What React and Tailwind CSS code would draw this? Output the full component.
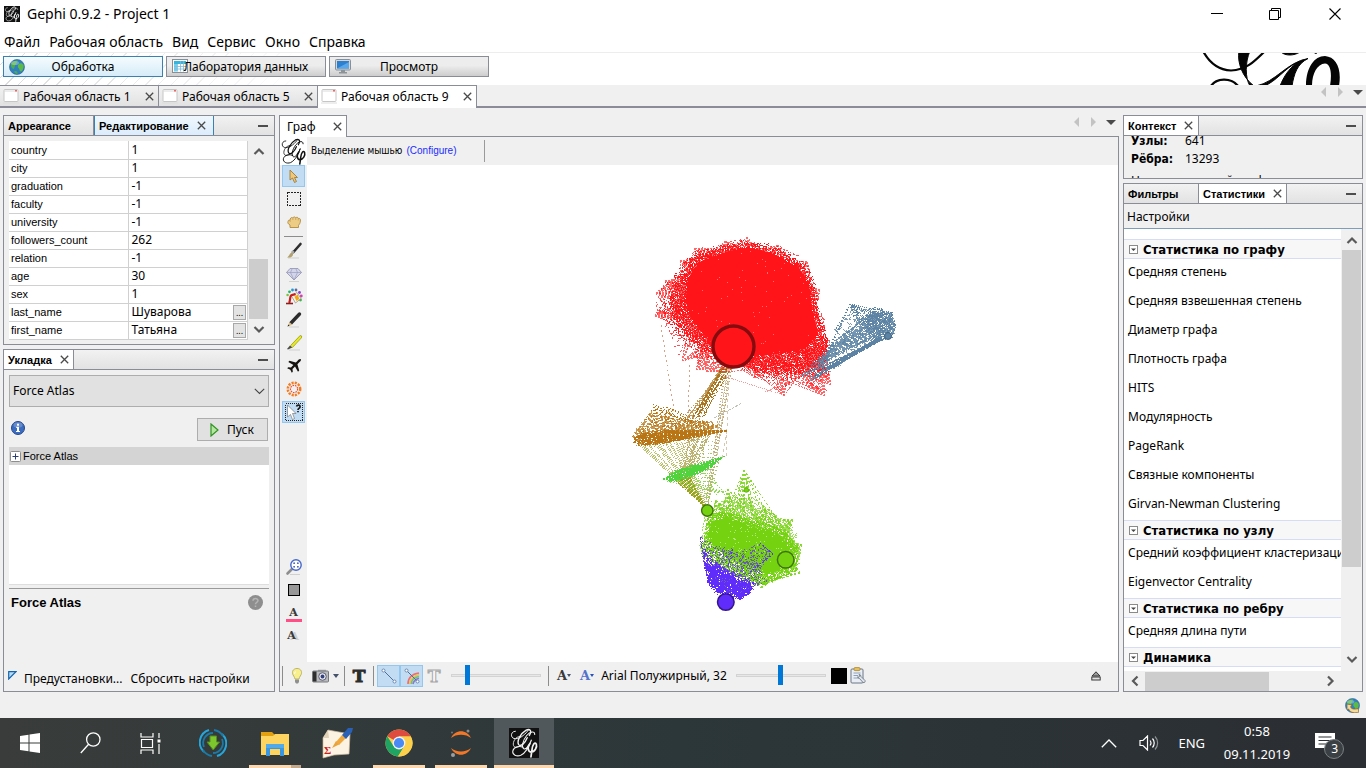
import React from "react";

/* ---------- shared text styles ---------- */
const UI = "font-['Noto_Sans','DejaVu_Sans_Condensed',sans-serif] text-[12px] leading-4";
const TAB = "font-['Liberation_Sans',Arial,sans-serif] text-[11px] leading-4 font-bold";
const SMALL = "font-['Liberation_Sans',Arial,sans-serif] text-[11px] leading-4";
const SHELL = "font-['Noto_Sans','Open_Sans',sans-serif]";

/* ---------- graph geometry ---------- */
function rng(seed) {
  let s = seed;
  return () => {
    s = (s * 1664525 + 1013904223) % 4294967296;
    return s / 4294967296;
  };
}

function inside([x, y], poly) {
  let hit = false;
  for (let i = 0, j = poly.length - 1; i < poly.length; j = i++) {
    const [xi, yi] = poly[i];
    const [xj, yj] = poly[j];
    if (yi > y !== yj > y && x < ((xj - xi) * (y - yi)) / (yj - yi) + xi) hit = !hit;
  }
  return hit;
}

function sampler(poly, rand) {
  const xs = poly.map((p) => p[0]);
  const ys = poly.map((p) => p[1]);
  const x0 = Math.min(...xs);
  const x1 = Math.max(...xs);
  const y0 = Math.min(...ys);
  const y1 = Math.max(...ys);
  return () => {
    for (;;) {
      const p = [x0 + rand() * (x1 - x0), y0 + rand() * (y1 - y0)];
      if (inside(p, poly)) return p;
    }
  };
}

const seg = (a, b) => `M${a[0].toFixed(1)} ${a[1].toFixed(1)}L${b[0].toFixed(1)} ${b[1].toFixed(1)}`;

function fans(tips, target, count, seed) {
  const rand = rng(seed);
  const pick = sampler(target, rand);
  let d = "";
  for (const t of tips) for (let i = 0; i < count; i++) d += seg(t, pick());
  return d;
}

function links(from, to, count, seed) {
  const rand = rng(seed);
  const a = sampler(from, rand);
  const b = sampler(to, rand);
  let d = "";
  for (let i = 0; i < count; i++) d += seg(a(), b());
  return d;
}

function chords(poly, count, reach, seed) {
  const rand = rng(seed);
  const pick = sampler(poly, rand);
  let d = "";
  for (let i = 0; i < count; i++) {
    const a = pick();
    const b = [a[0] + (rand() - 0.5) * reach, a[1] + (rand() - 0.5) * reach];
    if (inside(b, poly)) d += seg(a, b);
  }
  return d;
}

function specks(poly, count, seed) {
  const rand = rng(seed);
  const pick = sampler(poly, rand);
  let d = "";
  for (let i = 0; i < count; i++) {
    const [x, y] = pick();
    d += `M${Math.floor(x)} ${Math.floor(y)}h1v1h-1z`;
  }
  return d;
}

const pts = (poly) => poly.map((p) => p.join(",")).join(" ");

const redHull = [[656,293],[655,315],[662,326],[681,361],[690,347],[695,370],[702,360],[707,372],[716,364],[740,368],[755,378],[772,384],[784,396],[790,382],[825,396],[831,386],[831,340],[820,305],[820,288],[807,262],[798,255],[778,245],[762,242],[747,237],[725,241],[695,248],[680,261],[665,281]];
const redBody = [[660,293],[668,282],[682,263],[697,250],[727,243],[748,239],[777,246],[806,263],[818,288],[818,305],[829,340],[829,374],[790,380],[760,376],[740,368],[700,356],[684,342],[664,318]];
const redMid = [[670,298],[678,276],[690,258],[726,245],[748,242],[777,249],[804,265],[813,285],[818,310],[828,342],[826,370],[790,374],[760,373],[735,364],[700,348],[688,338],[672,316]];
const redCore = [[686,300],[688,278],[700,262],[726,252],[748,247],[774,254],[799,268],[809,285],[812,310],[818,334],[806,348],[780,354],[750,356],[718,348],[703,334],[690,316]];
const redTips = [[656,293],[655,316],[682,361],[696,370],[707,372],[784,396],[825,396],[831,385],[820,290],[807,262],[747,237],[778,245],[695,248],[680,261],[725,241],[755,378],[665,281]];

const blueHull = [[850,304],[862,306],[875,307],[893,311],[896,325],[894,338],[868,347],[834,370],[812,382],[806,378],[826,356],[832,330]];
const blueHead = [[868,310],[880,308],[893,313],[896,325],[894,337],[880,341],[870,336],[864,322]];
const blueTail = [[838,334],[832,350],[812,374],[800,380],[796,378],[820,354]];

const brownHull = [[632,438],[634,430],[642,422],[653,405],[660,416],[668,408],[674,417],[690,419],[712,421],[727,431],[706,437],[680,443],[660,447],[636,446]];
const brownCore = [[633,438],[640,434],[660,430],[685,431],[700,433],[690,438],[668,443],[640,446],[634,443]];
const brownTop = [[696,417],[700,424],[690,430],[675,425],[680,418]];

const limeHull = [[663,479],[672,471],[684,466],[706,461],[725,456],[714,466],[700,474],[683,480],[668,483]];

const greenHull = [[703,505],[712,510],[716,500],[725,500],[728,489],[733,502],[739,485],[744,470],[751,490],[757,504],[769,507],[778,517],[792,519],[796,532],[802,545],[800,573],[780,580],[762,588],[735,581],[705,562],[699,545],[703,525]];
const greenCore = [[708,516],[722,512],[735,514],[752,521],[770,524],[786,532],[798,548],[797,571],[764,585],[740,578],[712,562],[703,545]];
const greenSolid = [[712,522],[724,518],[736,520],[752,527],[768,530],[784,540],[790,552],[788,568],[768,574],[742,566],[718,550],[708,536]];
const greenTips = [[744,470],[728,489],[769,509],[793,520],[802,545],[762,588],[716,501],[800,573]];

const purpleHull = [[700,536],[706,548],[716,562],[733,570],[752,582],[768,580],[752,593],[742,600],[718,597],[708,585],[703,565]];
const purpleCore = [[704,563],[716,568],[732,577],[752,586],[750,594],[740,600],[724,596],[708,583]];
const purpleHaze = [[700,536],[715,545],[732,549],[740,552],[760,543],[773,554],[760,570],[768,580],[745,596],[710,584],[703,565]];

function Graph() {
  return (
    <svg viewBox="307 165 811 497" preserveAspectRatio="xMidYMin meet" className="block h-full w-full bg-white" shapeRendering="crispEdges" role="img" aria-label="Граф">
      {/* long thin links between communities */}
      <g fill="none" strokeWidth="1">
        <path d="M661 325L674 411M690 365L688 416" stroke="#d9a08a" strokeDasharray="2 3" />
        <path d={links([[722,364],[730,368],[724,372],[718,372]], brownTop, 16, 3)} stroke="#c29a5a" strokeDasharray="1 2" />
        <path d={links([[722,366],[732,367],[732,369],[722,369]], [[694,412],[706,414],[704,420],[692,420]], 15, 5)} stroke="#a87420" strokeDasharray="2 2" />
        <path d={links([[724,368],[732,368],[732,370],[724,370]], [[704,500],[709,500],[709,506],[704,506]], 7, 8)} stroke="#c3ab78" strokeDasharray="1 2" />
        <path d="M729 369L726 457M730 369L716 462M728 369L706 500M727 431L722 460" stroke="#d6c9b0" strokeDasharray="3 3" />
        <path d={fans([[707,508]], [[636,446],[662,446],[690,442],[686,438],[640,440]], 30, 9)} stroke="#a9b14b" strokeDasharray="1 1" opacity=".8" />
        <path d={fans([[706,508]], [[672,480],[690,478],[700,476],[676,474]], 22, 10)} stroke="#98a41c" strokeDasharray="2 1" />
        <path d={fans([[707,506]], [[690,440],[724,434],[722,462],[700,462]], 16, 19)} stroke="#a9c76a" strokeDasharray="1 3" />
        <path d={links(limeHull, [[706,500],[716,504],[728,492],[724,490]], 10, 22)} stroke="#8fdc50" strokeDasharray="1 2" />
        <path d={links([[690,425],[722,430],[700,438],[680,440]], [[676,470],[705,462],[700,470],[680,476]], 34, 31)} stroke="#bdb070" strokeDasharray="1 2" />
        <path d="M714 418L742 403" stroke="#bfc3b6" strokeDasharray="3 1" />
        <path d="M720 375L784 395M765 392L790 382" stroke="#f59a9a" strokeDasharray="1 1" />
      </g>

      {/* red community */}
      <g stroke="#ff1519" fill="none" strokeWidth="1">
        <path d={fans(redTips, redMid, 14, 11)} strokeDasharray="2 1" opacity=".65" />
        <path d={chords(redMid, 1500, 44, 12)} strokeDasharray="3 1" opacity=".6" />
        <path d={chords(redHull, 850, 26, 14)} strokeDasharray="2 2" opacity=".75" />
        <polygon points={pts(redCore)} fill="#ff1519" stroke="none" />
      </g>
      <path d={specks(redBody, 3400, 15)} fill="#ff1519" />
      <path d={specks(redMid, 9000, 17)} fill="#ff1519" />
      <path d={specks(redCore, 70, 16)} fill="#ff6b6d" />

      {/* blue community */}
      <g stroke="#5c83a4" fill="none" strokeWidth="1">
        <path d={links(blueHead, blueTail, 54, 41)} strokeDasharray="2 3" opacity=".85" />
        <path d={links([[880,336],[892,338],[872,342]], [[834,368],[812,382],[808,380],[826,362]], 14, 47)} strokeDasharray="3 1" />
        <path d={fans([[850,304]], blueHull, 14, 42)} strokeDasharray="1 2" />
        <path d={fans([[850,304],[893,312],[896,325],[875,307]], blueHead, 8, 43)} strokeDasharray="1 1" />
        <path d={chords(blueHull, 190, 24, 48)} strokeDasharray="2 2" opacity=".8" />
        <path d={chords(blueHead, 120, 20, 44)} strokeDasharray="2 1" opacity=".8" />
      </g>
      <path d={specks(blueHead, 220, 45)} fill="#5c83a4" />

      {/* brown community */}
      <g stroke="#b97514" fill="none" strokeWidth="1">
        <path d={fans([[653,404],[667,407]], brownHull, 12, 51)} strokeDasharray="1 2" />
        <path d={fans([[727,431]], brownCore, 26, 52)} strokeDasharray="3 1" />
        <path d={fans([[633,437],[712,421],[717,427]], brownHull, 13, 53)} strokeDasharray="2 2" opacity=".75" />
        <path d={chords(brownHull, 300, 30, 54)} strokeDasharray="2 2" opacity=".75" />
      </g>
      <path d={specks(brownCore, 620, 55)} fill="#b97514" />

      {/* lime community */}
      <g stroke="#50d43e" fill="none" strokeWidth="1">
        <path d={fans([[725,456],[663,479],[712,467]], limeHull, 16, 61)} strokeDasharray="2 1" />
        <path d={chords(limeHull, 170, 28, 62)} strokeDasharray="2 1" />
      </g>

      {/* green community */}
      <g stroke="#75d211" fill="none" strokeWidth="1">
        <path d={fans(greenTips, greenCore, 14, 71)} strokeDasharray="2 2" opacity=".85" />
        <path d={chords(greenHull, 980, 28, 72)} strokeDasharray="2 1" opacity=".7" />
        <polygon points={pts(greenSolid)} fill="#75d211" stroke="none" />
      </g>
      <path d={specks(greenCore, 4200, 73)} fill="#75d211" />
      <path d={specks(greenCore, 160, 74)} fill="#b2e97a" />

      {/* purple community */}
      <g stroke="#602cfb" fill="none" strokeWidth="1">
        <path d={chords(purpleHaze, 210, 26, 81)} strokeDasharray="1 3" opacity=".75" />
        <path d={chords(purpleHull, 420, 26, 82)} strokeDasharray="2 2" />
        <path d="M773 554L755 568L748 574M760 543L773 554M733 549L728 566" strokeDasharray="2 1" />
      </g>
      <path d={specks(purpleHaze, 420, 84)} fill="#6d5ab8" />
      <path d={specks(purpleCore, 1000, 83)} fill="#602cfb" />

      {/* nodes */}
      <g shapeRendering="auto">
        <circle cx="733.5" cy="346.5" r="20.5" fill="#ff1519" stroke="#850c0e" strokeWidth="3.4" />
        <circle cx="888" cy="336" r="3.5" fill="#5c83a4" stroke="#3f627e" />
        <circle cx="707.3" cy="510.5" r="5.7" fill="#75d211" stroke="#3f7309" strokeWidth="1.4" />
        <circle cx="746.3" cy="490" r="2.3" fill="#75d211" stroke="#5aa40c" strokeWidth=".8" />
        <circle cx="785.7" cy="559.8" r="8.3" fill="#75d211" stroke="#3f7309" strokeWidth="1.5" />
        <circle cx="725.8" cy="602" r="8.3" fill="#602cfb" stroke="#341689" strokeWidth="1.5" />
      </g>
    </svg>
  );
}

/* ---------- icons ---------- */
function Script({ size, color = "#111", bg = "none", className = "" }) {
  return (
    <svg width={size} height={size} viewBox="0 0 28 28" className={className} fill="none" stroke={color} strokeLinecap="round" aria-hidden="true">
      {bg !== "none" && <rect width="28" height="28" fill={bg} stroke="none" />}
      <path d="M6 3C1 3 1 10 6 10C11 10 16 5 18 2" strokeWidth=".9" />
      <path d="M19 7C22 2 19 .5 16 2C11 5 7 12 9 15.500C11 18 15 14 17 9" strokeWidth="1.300" />
      <path d="M24 6C24 2.500 20 3 16.500 7C12.500 12 11.500 18 14 19.500C16.500 20 19.500 15 21 11C19 17 16 23 11 25.500C7 27 3 25 3.500 21.500C4.500 17.500 10 16 13.500 18.500" strokeWidth="1" />
      <path d="M11 8C8 7 4 11 4 15C4 19 8 19 11 16" strokeWidth=".8" />
      <path d="M19.500 14.500C17 17 17.500 22 20.500 22.500C24 22.500 26.500 18 25.500 15C24 12.500 22 15.500 21.500 20L20.500 27" strokeWidth="1.600" />
    </svg>
  );
}

const CloseX = () => (
  <svg width="9" height="9" viewBox="0 0 9 9" className="block" stroke="#4a4a4a" strokeWidth="1.3" aria-hidden="true">
    <path d="M.8 .8L8.2 8.2M8.2 .8L.8 8.2" />
  </svg>
);

const Chevron = ({ dir }) => {
  const d = { up: "M1.5 9L6 4.5L10.500 9", down: "M1.500 4L6 8.500L10.500 4", left: "M8.500 1.500L4 6L8.500 10.500", right: "M4 1.500L8.500 6L4 10.500" }[dir];
  return (
    <svg width="12" height="12" viewBox="0 0 12 12" className="block" fill="none" stroke="#5a5a5a" strokeWidth="2.200" aria-hidden="true">
      <path d={d} />
    </svg>
  );
};

const Globe = ({ small }) => (
  <svg width={small ? 15 : 16} height={small ? 15 : 16} viewBox="0 0 16 16" aria-hidden="true">
    <circle cx="8" cy="8" r="7.500" fill="#2f7fc1" stroke="#2a5d8f" strokeWidth=".6" />
    <path d="M2 5C4 2 7 1 8.500 1.500C9 3 7 4 6.500 6C5 8 6 9 4.500 10C2.500 9.500 1.500 7 2 5Z" fill="#4fae4a" />
    <path d="M9.500 5.500C11 3.500 13 4 14.500 6C15 9 13.500 12 12 12.500C10 12 11 10 9.500 9C8.500 8 8.700 6.500 9.500 5.500Z" fill="#5cbb45" />
    <path d="M5 12.500C7 11 9 12.500 8.500 15C7 15 5.500 14 5 12.500Z" fill="#4fae4a" />
    <ellipse cx="6" cy="4" rx="4" ry="2" fill="#fff" opacity=".3" />
  </svg>
);

const Sheet = () => (
  <svg width="16" height="15" viewBox="0 0 16 15" aria-hidden="true">
    <rect x=".5" y=".5" width="15" height="13" fill="#fff" stroke="#8b8f93" />
    <rect x="2" y="2" width="12" height="3" fill="#36b5dc" />
    <rect x="2" y="5" width="3" height="7.500" fill="#6fd0ee" />
    <path d="M5.500 5V12.500M8.500 2V12.500M11.500 2V12.500M2 7.500H14M2 10H14" stroke="#7fb9d8" strokeWidth=".8" />
  </svg>
);

const Monitor = () => (
  <svg width="16" height="15" viewBox="0 0 16 15" aria-hidden="true">
    <rect x=".5" y=".5" width="15" height="10.500" rx="1" fill="#d4d6d8" stroke="#8a8f94" />
    <rect x="2" y="2" width="12" height="7.500" fill="#2d7fd0" />
    <path d="M2 9.500L14 3V9.500Z" fill="#59a7ea" />
    <path d="M6 11H10V13H12V14.500H4V13H6Z" fill="#8e9398" />
  </svg>
);

const Pane = () => (
  <svg width="17" height="15" viewBox="0 0 17 15" aria-hidden="true">
    <rect x="1" y=".5" width="14" height="12" rx="1" fill="#fff" stroke="#c6c6c6" />
    <path d="M1 2H14" stroke="#dadada" />
    <rect x="12" y="1" width="2" height="1.500" fill="#e66" />
    <path d="M0 14H16" stroke="#dcdcdc" />
  </svg>
);

const LogoBanner = () => (
  <svg width="140" height="32" viewBox="1202 53 140 32" className="block" fill="none" stroke="#050505" aria-hidden="true">
    <path d="M1203 51C1210 64 1220 70 1231 70.500C1246 70 1254 62 1265 51" strokeWidth="2.200" />
    <path d="M1239 51C1237 62 1242 77 1254 86L1250 86C1245 78 1245 62 1250 51Z" fill="#050505" strokeWidth="1" />
    <path d="M1211 86C1216 78 1231 77 1238 86" strokeWidth="2.400" />
    <path d="M1256 86C1276 82 1287 62 1308 58.500C1297 64 1294 74 1292 86H1280C1284 76 1289 69 1296 63.500C1286 67 1276 82 1264 86Z" fill="#050505" strokeWidth="1" />
    <path d="M1306 86C1306 68 1314 56 1325 56C1336 57 1342 68 1339 86H1330C1332 74 1331 64 1325 63.500C1317 64 1312 74 1312 86Z" fill="#050505" stroke="none" />
    <path d="M1281 52C1285 56 1294 56 1300 52Z M1313 52L1316 53.500L1318 52Z" fill="#050505" />
  </svg>
);

const svg16 = { width: 18, height: 18, viewBox: "0 0 18 18", "aria-hidden": true };
const ToolIcons = {
  select: <svg {...svg16}><path d="M5 3L5 13L7.500 11L9.500 15.500L11.500 14.500L9.500 10.500H12.500Z" fill="#f0c678" stroke="#a37b33" strokeWidth=".9" /></svg>,
  rect: <svg {...svg16}><rect x="2.500" y="2.500" width="13" height="13" fill="none" stroke="#222" strokeDasharray="2 1" shapeRendering="crispEdges" /></svg>,
  hand: <svg {...svg16}><path d="M5 14.500V12C3 11 2.500 9.500 3 8.500C3 7 4.500 7 5 7.500C5 4.500 7 4 7.700 5C8.500 3.500 10.200 3.700 10.700 4.800C12 3.800 13.200 4.500 13.400 5.500C15 5 15.700 6.200 15.400 8C15.300 10.500 14 11.500 13.500 12.500V14.500Z" fill="#edcd86" stroke="#b08a3e" strokeWidth=".9" /><path d="M5.200 7.500V9M7.900 5V7M10.700 5V7M13.300 5.500V7.500" stroke="#c29c50" strokeWidth=".7" /></svg>,
  brush: <svg {...svg16}><path d="M3 16H14" stroke="#cfcfcf" /><path d="M15.500 2L8.500 10" stroke="#2e2e2e" strokeWidth="2.600" strokeLinecap="round" /><path d="M8.500 9L7 11" stroke="#aaa" strokeWidth="2.800" /><path d="M7 10.500C4.500 11 4.500 14 2 15.500C5.500 16 8.500 14.500 8 11.500Z" fill="#b3a06f" /></svg>,
  gem: <svg {...svg16}><path d="M5 3.500H13L16.500 7.500L9 15L1.500 7.500Z" fill="#d3d5ea" stroke="#8f91ad" strokeWidth=".8" /><path d="M1.500 7.500H16.500M5.500 7.500L9 15L12.500 7.500L11 4M7 4L5.500 7.500" fill="none" stroke="#9a9cbb" strokeWidth=".7" /><path d="M4 16.500H14" stroke="#d2d2d2" /></svg>,
  bucket: <svg {...svg16}><g><circle cx="2.600" cy="7" r="1.300" fill="#7fbf3f" /><circle cx="4.500" cy="3.800" r="1.400" fill="#24b560" /><circle cx="7.500" cy="2" r="1.400" fill="#2196d8" /><circle cx="11" cy="2" r="1.400" fill="#5a6a9a" /><circle cx="14.500" cy="4.500" r="1.400" fill="#8a3fd0" /><circle cx="16.300" cy="8" r="1.400" fill="#d53aae" /><circle cx="15.500" cy="12" r="1.400" fill="#39b54a" /></g><path d="M6.500 8L12 4.500L16 10.500L10.500 15Z" fill="#fbf3e0" stroke="#888" strokeWidth=".7" /><path d="M9.500 8.800L12.800 6.500L14.300 11L11.500 13Z" fill="#f0a818" /><path d="M4 15C5.500 13 4.500 10 6 7.500C7.500 6 9 7 10.500 6" fill="none" stroke="#c81e1e" strokeWidth="2.200" /><path d="M1 15.500H8" stroke="#8e1c1c" strokeWidth="1.600" /></svg>,
  pencil: <svg {...svg16}><path d="M4 16H14" stroke="#cfcfcf" /><path d="M14.500 3L6 12" stroke="#2c2c2c" strokeWidth="3.400" strokeLinecap="round" /><path d="M4.500 11L7.500 13.700L2.500 15.500Z" fill="#d8bd86" /><path d="M3.300 13.500L4.500 14.800L2.500 15.500Z" fill="#222" /></svg>,
  marker: <svg {...svg16}><path d="M4 16H15" stroke="#cfcfcf" /><path d="M15.500 3L7 12" stroke="#8b8d08" strokeWidth="3.200" strokeLinecap="round" /><path d="M15.500 3L7 12" stroke="#e8ea23" strokeWidth="2.100" strokeLinecap="round" /><path d="M5 11.500L7.200 13.500L3 15.500L2 15Z" fill="#4b4b4b" /></svg>,
  plane: <svg {...svg16}><path d="M15.800 2.200C14.800 1.600 13.600 2.600 12.200 4.200L10.800 5.600L4.500 3.800L3.300 5L8.400 8L6 10.500L3.200 10.200L2.200 11.200L5.300 12.700L6.800 15.800L7.800 14.800L7.500 12L10 9.600L13 14.700L14.200 13.500L12.400 7.200L13.800 5.800C15.400 4.400 16.400 3.200 15.800 2.200Z" fill="#15120f" /></svg>,
  ring: <svg {...svg16}><circle cx="9" cy="9" r="6.200" fill="none" stroke="#f47b20" strokeWidth="2.500" strokeDasharray="2.100 1.150" /><circle cx="9" cy="9" r="3.600" fill="none" stroke="#f04a22" strokeWidth="1.100" strokeDasharray="1.600 .9" /></svg>,
  query: <svg {...svg16}><rect x=".5" y=".5" width="17" height="17" fill="none" stroke="#222" strokeDasharray="1 1" shapeRendering="crispEdges" /><path d="M2.500 2L2.500 14L5.500 11.500L7.500 16.500L9.500 15.500L7.500 10.500H11Z" fill="#fff" stroke="#666" strokeWidth=".6" /><path d="M11.500 3.500C12 1.500 15.500 1.500 15 4C14.700 5.500 13 5.500 13 7M13 8V9.300" fill="none" stroke="#1a1a1a" strokeWidth="1.700" /></svg>,
  zoom: <svg {...svg16}><path d="M7 11L2.500 15.500" stroke="#8e8e8e" strokeWidth="2.600" strokeLinecap="round" /><path d="M5 16.500H15" stroke="#d0d0d0" /><circle cx="11" cy="7" r="5.200" fill="#fff" stroke="#4768c8" strokeWidth="1.400" /><path d="M9 6V5H10M12 5H13V6M13 8V9H12M10 9H9V8" fill="none" stroke="#2a49b5" strokeWidth="1.200" /></svg>,
  square: <svg {...svg16}><rect x="3.500" y="3.500" width="11" height="11" fill="#979797" stroke="#000" shapeRendering="crispEdges" /></svg>,
};

const Slab = ({ color, size = "text-[13px]", children }) => (
  <span className={`block font-['DejaVu_Serif',serif] font-bold leading-4 ${size} ${color}`}>{children}</span>
);

/* ---------- small parts ---------- */
const Tool = ({ label, active, children }) => (
  <button aria-label={label} className={`flex h-[22px] w-[23px] items-center justify-center border ${active ? "border-[#93c7f0] bg-[#c2dcf3]" : "border-transparent"}`}>
    {children}
  </button>
);

const Sep = () => <span className="h-5 w-px shrink-0 bg-[#8c8c8c]" />;

function HeadTab({ label, closable, tone, className }) {
  const tones = {
    idle: "border-[#8a8d98] bg-linear-to-b from-[#f2f2f2] to-[#e2e2e2]",
    open: "border-[#8a8d98] bg-white",
    focus: "border-[#3c7fb1] border-l bg-linear-to-b from-[#f0f7fd] to-[#dcecfb]",
  };
  return (
    <div className={`flex h-full items-center border-r pl-1 ${tones[tone]} ${className}`}>
      <button className={TAB}>{label}</button>
      {closable && (
        <button aria-label={`Закрыть ${label}`} className="ml-2">
          <CloseX />
        </button>
      )}
    </div>
  );
}

function Panel({ tabs, className = "", children }) {
  return (
    <section className={`flex flex-col border border-[#8a8d98] bg-[#f0f0f0] ${className}`}>
      <header className="flex h-5 shrink-0 border-b border-[#8a8d98] bg-linear-to-b from-[#f2f2f2] to-[#e2e2e2]">
        {tabs}
        <button aria-label="Свернуть" className="mr-1.5 ml-auto flex items-center">
          <span className="h-0.5 w-2.5 bg-[#4d4d4d]" />
        </button>
      </header>
      {children}
    </section>
  );
}

function ScrollArrows() {
  return (
    <div className="flex items-center gap-3">
      <button aria-label="Назад"><svg width="5" height="10" viewBox="0 0 5 10" className="block"><path d="M5 0V10L0 5Z" fill="#c3c3c3" /></svg></button>
      <button aria-label="Вперёд"><svg width="5" height="10" viewBox="0 0 5 10" className="block"><path d="M0 0V10L5 5Z" fill="#c3c3c3" /></svg></button>
      <button aria-label="Список" className="-ml-0.5"><svg width="10" height="5" viewBox="0 0 10 5" className="block"><path d="M0 0H10L5 5Z" fill="#4a4a4a" /></svg></button>
    </div>
  );
}

const Slider = ({ label, value }) => (
  <input
    type="range"
    aria-label={label}
    min="0"
    max="100"
    defaultValue={value}
    className="h-5 w-[90px] appearance-none bg-transparent [&::-webkit-slider-runnable-track]:h-[3px] [&::-webkit-slider-runnable-track]:border [&::-webkit-slider-runnable-track]:border-[#d3d3d3] [&::-webkit-slider-runnable-track]:bg-[#e7e7e7] [&::-webkit-slider-thumb]:-mt-2.5 [&::-webkit-slider-thumb]:h-5 [&::-webkit-slider-thumb]:w-[5px] [&::-webkit-slider-thumb]:appearance-none [&::-webkit-slider-thumb]:bg-[#0078d7]"
  />
);

/* ---------- data ---------- */
const workspaces = ["Рабочая область 1", "Рабочая область 5", "Рабочая область 9"];
const props = [["country", "1"], ["city", "1"], ["graduation", "-1"], ["faculty", "-1"], ["university", "-1"], ["followers_count", "262"], ["relation", "-1"], ["age", "30"], ["sex", "1"], ["last_name", "Шуварова", true], ["first_name", "Татьяна", true]];
const stats = [
  ["Статистика по графу", ["Средняя степень", "Средняя взвешенная степень", "Диаметр графа", "Плотность графа", "HITS", "Модулярность", "PageRank", "Связные компоненты", "Girvan-Newman Clustering"]],
  ["Статистика по узлу", ["Средний коэффициент кластеризации", "Eigenvector Centrality"]],
  ["Статистика по ребру", ["Средняя длина пути"]],
  ["Динамика", []],
];

/* ---------- sections ---------- */
function TitleBar() {
  return (
    <header className="flex h-7 items-center bg-white pl-1">
      <Script size={16} color="#fff" bg="#111" />
      <h1 className={`${SHELL} ml-[7px] text-[14px] leading-5`}>Gephi 0.9.2 - Project 1</h1>
      <div className="ml-auto flex">
        <button aria-label="Свернуть окно" className="flex h-7 w-[58px] items-center justify-center"><svg width="12" height="12"><path d="M0 5.500H12" stroke="#000" /></svg></button>
        <button aria-label="Восстановить" className="flex h-7 w-[58px] items-center justify-center"><svg width="12" height="12" fill="none" stroke="#000"><path d="M.5 2.500H9.500V11.500H.5ZM2.500 2.500V.5H11.500V9.500H9.500" /></svg></button>
        <button aria-label="Закрыть окно" className="flex h-7 w-[62px] items-center justify-center"><svg width="12" height="12" stroke="#000" strokeWidth="1.100"><path d="M.5 .5L11.500 11.500M11.500 .5L.5 11.500" /></svg></button>
      </div>
    </header>
  );
}

function ModeBar() {
  const modes = [["Обработка", <Globe />, true], ["Лаборатория данных", <Sheet />], ["Просмотр", <Monitor />]];
  return (
    <div className="relative flex h-[33px] justify-between border-t border-[#ededed] bg-white">
      <div className="absolute inset-y-0 left-0 w-80 bg-[repeating-linear-gradient(135deg,#ffffff_0px,#ffffff_8px,#dcdcdc_8px,#dcdcdc_9px)] mask-r-from-0% mask-r-to-100%" />
      <div className="relative flex gap-[3px] pt-[3px] pl-[3px]">
        {modes.map(([label, icon, on]) => (
          <button key={label} className={`relative h-[21px] w-[160px] border ${UI} ${on ? "border-[#3c7fb1] bg-linear-to-b from-[#f5fbfe] to-[#d6ecf8]" : "border-[#8a8d98] bg-linear-to-b from-[#ededed] from-45% to-[#cdcdcd]"}`}>
            <span className="absolute top-0.5 left-[5px]">{icon}</span>
            <span className="relative">{label}</span>
          </button>
        ))}
      </div>
      <div className="mr-6"><LogoBanner /></div>
    </div>
  );
}

function WorkspaceTabs() {
  return (
    <nav className="flex h-[23px] justify-between border-b-2 border-[#8a8d98] bg-[#f0f0f0]">
      <div className="flex">
        {workspaces.map((w, i) => (
          <div key={w} className={`flex w-[159px] items-center border-t border-r border-[#8a8d98] pt-px pl-[3px] ${i === 2 ? "-mb-0.5 bg-white pb-0.5" : "bg-linear-to-b from-[#f2f2f2] to-[#e2e2e2]"}`}>
            <Pane />
            <button className={`${UI} ml-[3px]`}>{w}</button>
            <button aria-label={`Закрыть ${w}`} className="mr-1 ml-auto"><CloseX /></button>
          </div>
        ))}
      </div>
      <div className="flex items-start pt-0.5 pr-[3px]"><ScrollArrows /></div>
    </nav>
  );
}

function PropertyPanel() {
  return (
    <Panel className="h-[230px]" tabs={<><HeadTab label="Appearance" tone="idle" className="w-[90px]" /><HeadTab label="Редактирование" tone="focus" closable className="w-[120px]" /></>}>
      <div className="flex flex-1 gap-px px-[5px] py-[5px]">
        <table className="w-[239px] table-fixed border-collapse bg-white">
          <tbody>
            {props.map(([k, v, more]) => (
              <tr key={k} className="h-[18px] border-b border-[#d0d0d0]">
                <th scope="row" className={`${SMALL} w-[119px] border-r border-[#d0d0d0] p-0 pl-0.5 text-left font-normal`}>{k}</th>
                <td className={`${UI} border-r border-[#d0d0d0] p-0 pl-[3px]`}>
                  <div className="flex h-4 items-center justify-between">
                    {v}
                    {more && <button aria-label={`Изменить ${k}`} className="mr-px h-[15px] w-[13px] border border-[#a8a8a8] bg-[#e3e3e3] text-[9px] leading-[9px]">...</button>}
                  </div>
                </td>
              </tr>
            ))}
          </tbody>
        </table>
        <div className="flex w-[19px] flex-col items-center">
          <button aria-label="Вверх" className="flex h-5 items-center"><Chevron dir="up" /></button>
          <div className="mt-[98px] h-[60px] w-full bg-[#cdcdcd]" />
          <button aria-label="Вниз" className="flex h-5 items-center"><Chevron dir="down" /></button>
        </div>
      </div>
    </Panel>
  );
}

function LayoutPanel() {
  return (
    <Panel className="flex-1" tabs={<HeadTab label="Укладка" tone="open" closable className="w-[70px]" />}>
      <div className="flex flex-1 flex-col px-[5px] pt-[5px] pb-1">
        <div className="relative">
          <select aria-label="Алгоритм укладки" defaultValue="Force Atlas" className={`h-8 w-full appearance-none border border-[#adadad] bg-[#e1e1e1] pl-[3px] ${UI}`}>
            <option>Force Atlas</option>
          </select>
          <svg width="11" height="7" viewBox="0 0 11 7" className="pointer-events-none absolute top-[13px] right-1" fill="none" stroke="#444" strokeWidth="1.100"><path d="M.8 .8L5.500 5.500L10.200 .8" /></svg>
        </div>
        <div className="mt-[11px] flex items-start justify-between pl-0.5">
          <svg width="14" height="14" viewBox="0 0 14 14" className="mt-[3px]" aria-hidden="true">
            <circle cx="7" cy="7" r="6.500" fill="#3b6cc0" stroke="#27478a" />
            <ellipse cx="7" cy="4" rx="4.500" ry="2.800" fill="#fff" opacity=".22" />
            <rect x="6" y="2.700" width="2" height="2" fill="#fff" />
            <path d="M5 5.700H8V10H9V11H5V10H6V6.700H5Z" fill="#fff" />
          </svg>
          <button className={`mr-px flex h-[23px] w-[71px] items-center border border-[#adadad] bg-[#e1e1e1] pl-3 ${UI}`}>
            <svg width="9" height="14" viewBox="0 0 9 14" aria-hidden="true"><path d="M1 1L8 7L1 13Z" fill="#b5e6a0" stroke="#2f9421" strokeWidth="1.200" /></svg>
            <span className="ml-2">Пуск</span>
          </button>
        </div>
        <div className="mt-1.5 flex h-[18px] items-center bg-[#d4d4d4] pl-px">
          <svg width="11" height="11" viewBox="0 0 11 11" aria-hidden="true"><rect x=".5" y=".5" width="10" height="10" rx="1" fill="#fff" stroke="#8d8d8d" /><path d="M2.500 5.500H8.500M5.500 2.500V8.500" stroke="#2c3f74" /></svg>
          <span className={`${SMALL} ml-0.5`}>Force Atlas</span>
        </div>
        <div className="h-[120px] border-b border-[#dedede] bg-white" />
        <div className="mt-[3px] flex justify-between border-t border-[#9a9a9a] pt-1.5 pr-1.5 pl-0.5">
          <h2 className="font-['Liberation_Sans',Arial,sans-serif] text-[13px] leading-4 font-bold">Force Atlas</h2>
          <svg width="15" height="15" viewBox="0 0 15 15" role="img" aria-label="Справка"><circle cx="7.500" cy="7.500" r="7.500" fill="#8e8e8e" /><path d="M5 5.800C5 2.800 10 2.800 10 5.600C10 7.500 7.500 7.300 7.500 9.200M7.500 10.500V12" fill="none" stroke="#b4b4b4" strokeWidth="1.500" /></svg>
        </div>
        <div className={`mt-auto flex items-start ${UI}`}>
          <svg width="9" height="9" viewBox="0 0 9 9" className="-ml-px" aria-hidden="true"><path d="M.7 .7H8L.7 8Z" fill="#b6dcf5" stroke="#1565ae" strokeWidth="1.200" /></svg>
          <button className="ml-[7px]">Предустановки...</button>
          <button className="ml-2">Сбросить настройки</button>
        </div>
      </div>
    </Panel>
  );
}

function GraphPanel() {
  return (
    <section className="flex min-w-0 flex-1 flex-col">
      <div className="flex h-[22px] items-start justify-between">
        <div className="relative z-10 -mb-px flex h-[22px] w-[68px] items-center border border-b-0 border-[#8a8d98] bg-white pl-[7px]">
          <button className={UI}>Граф</button>
          <button aria-label="Закрыть Граф" className="mr-1 ml-auto"><CloseX /></button>
        </div>
        <div className="pt-0.5 pr-[3px]"><ScrollArrows /></div>
      </div>
      <div className="-mt-px flex flex-1 flex-col border border-[#8a8d98] bg-[#f0f0f0]">
        <div className="flex h-7 items-center">
          <div className="flex h-full w-[27px] items-center justify-center bg-white"><Script size={27} /></div>
          <span className="ml-1 font-['DejaVu_Sans_Condensed','DejaVu_Sans',sans-serif] text-[10px] leading-4">Выделение мышью</span>
          <a href="#configure" className="ml-1 font-['Liberation_Sans',Arial,sans-serif] text-[10px] leading-4 text-[#1a2cff]">(Configure)</a>
          <span className="ml-7 h-[22px] w-px bg-[#9a9a9a]" />
        </div>
        <div className="flex flex-1">
          <div className="flex w-[27px] shrink-0 flex-col gap-px pb-[15px] pl-0.5">
            <Tool label="Выделение мышью" active>{ToolIcons.select}</Tool>
            <Tool label="Прямоугольное выделение">{ToolIcons.rect}</Tool>
            <Tool label="Перемещение">{ToolIcons.hand}</Tool>
            <span className="my-0.5 ml-0.5 h-px w-[19px] bg-[#8c8c8c]" />
            <Tool label="Кисть">{ToolIcons.brush}</Tool>
            <Tool label="Размер">{ToolIcons.gem}</Tool>
            <Tool label="Заливка">{ToolIcons.bucket}</Tool>
            <Tool label="Карандаш узлов">{ToolIcons.pencil}</Tool>
            <Tool label="Карандаш рёбер">{ToolIcons.marker}</Tool>
            <Tool label="Кратчайший путь">{ToolIcons.plane}</Tool>
            <Tool label="Тепловая карта">{ToolIcons.ring}</Tool>
            <Tool label="Редактирование узла" active>{ToolIcons.query}</Tool>
            <div className="mt-auto flex flex-col gap-px">
              <Tool label="Центрировать">{ToolIcons.zoom}</Tool>
              <Tool label="Цвет фона">{ToolIcons.square}</Tool>
              <Tool label="Цвет меток">
                <span className="flex flex-col items-center"><Slab color="text-[#3a3a3a]" size="text-[11px]">A</Slab><span className="-mt-0.5 h-[3px] w-4 bg-[#ff4f86]" /></span>
              </Tool>
              <Tool label="Видимость меток"><span className="-ml-1"><Slab color="text-[#3a3a3a] [text-shadow:3px_1px_0_#cfcfcf]" size="text-[11px]">A</Slab></span></Tool>
            </div>
          </div>
          <div className="min-w-0 flex-1 overflow-hidden bg-white"><Graph /></div>
        </div>
        <div className="flex h-[29px] items-center pr-[17px] pb-0.5 pl-0.5">
          <Sep />
          <button aria-label="Подсветка" className="ml-1.5">
            <svg width="16" height="18" viewBox="0 0 16 18" className="block"><path d="M8 1.500C4.500 1.500 3.200 4 3.500 6.200C3.800 8.500 5.600 9.500 6 12H10C10.400 9.500 12.200 8.500 12.500 6.200C12.800 4 11.500 1.500 8 1.500Z" fill="#f8f08c" stroke="#b5ad62" strokeWidth=".9" /><path d="M6 12.500H10V15L9 16.500H7L6 15Z" fill="#8f8f8f" /><path d="M7 4.500C6 5 5.500 6 5.700 7" stroke="#fff" fill="none" /></svg>
          </button>
          <button aria-label="Снимок" className="ml-[7px] flex items-center">
            <svg width="17" height="14" viewBox="0 0 17 14"><rect x=".5" y="2" width="16" height="11" rx="1" fill="#b9bbbe" stroke="#76797c" /><rect x="1" y="2.500" width="3.500" height="10" fill="#2e2e2e" /><rect x="6" y=".8" width="8" height="2" fill="#8f9295" /><circle cx="10.500" cy="7.500" r="3.800" fill="#e6e6ee" stroke="#5c5e70" /><circle cx="10.500" cy="7.500" r="1.900" fill="#32407c" /></svg>
            <svg width="6" height="4" viewBox="0 0 6 4" className="ml-1"><path d="M0 0H6L3 4Z" fill="#44526a" /></svg>
          </button>
          <span className="ml-[5px] flex"><Sep /></span>
          <button aria-label="Показать метки" className="ml-1.5 flex h-4 w-4 justify-center"><Slab color="text-[#2c2c2c] [-webkit-text-stroke:1px_#2c2c2c]" size="text-[17px]">T</Slab></button>
          <span className="ml-1.5 flex"><Sep /></span>
          <div className="ml-[3px] flex">
            <Tool label="Показать рёбра" active>
              <svg {...svg16}><path d="M3.500 3.500L14.500 14.500" stroke="#4e7096" /><circle cx="3.500" cy="3.500" r="1.500" fill="#fff" stroke="#6d8bb0" /><circle cx="14.500" cy="14.500" r="1.500" fill="#fff" stroke="#6d8bb0" /></svg>
            </Tool>
            <Tool label="Цвет рёбер" active>
              <svg {...svg16} fill="none"><path d="M5 17C5 11 9 7 16 6" stroke="#ee6d74" strokeWidth="1.600" /><path d="M6.700 17C7 12 10 9 16 7.800" stroke="#f0c24a" strokeWidth="1.600" /><path d="M8.300 17C8.500 13 11 10.500 16 9.500" stroke="#74c27a" strokeWidth="1.600" /><path d="M10 17C10.500 14 12 12.500 16 11.300" stroke="#8a7ac8" strokeWidth="1.600" /><path d="M3.500 3.500L14.500 14.500" stroke="#4e7096" /><circle cx="3.500" cy="3.500" r="1.500" fill="#fff" stroke="#6d8bb0" /><circle cx="14.500" cy="14.500" r="1.500" fill="#fff" stroke="#6d8bb0" /></svg>
            </Tool>
          </div>
          <button aria-label="Метки рёбер" className="ml-[3px] flex h-4 w-4 justify-center"><Slab color="text-[#fafafa] [-webkit-text-stroke:1px_#a8a8a8]" size="text-[17px]">T</Slab></button>
          <span className="ml-[9px] flex"><Slider label="Толщина рёбер" value={16} /></span>
          <span className="ml-[7px] flex"><Sep /></span>
          <button aria-label="Размер меток" className="ml-2 flex items-center"><Slab color="text-[#3a3a3a]">A</Slab><svg width="4" height="3" viewBox="0 0 4 3"><path d="M0 0H4L2 3Z" fill="#44526a" /></svg></button>
          <button aria-label="Цвет меток узлов" className="ml-[9px] flex items-center"><Slab color="text-[#5573cb]">A</Slab><svg width="4" height="3" viewBox="0 0 4 3"><path d="M0 0H4L2 3Z" fill="#2a4fc0" /></svg></button>
          <button className={`ml-[7px] ${UI}`}>Arial Полужирный, 32</button>
          <span className="ml-[9px] flex"><Slider label="Масштаб меток" value={50} /></span>
          <button aria-label="Цвет по умолчанию" className="ml-[5px] h-4 w-4 bg-black" />
          <button aria-label="Атрибуты" className="ml-[3px]">
            <svg width="16" height="17" viewBox="0 0 16 17" className="block"><rect x="1" y="2" width="12" height="14" rx="1" fill="#e9eef5" stroke="#6a7686" /><rect x="4" y=".6" width="6" height="3" rx="1" fill="#e7c25c" stroke="#a8842c" strokeWidth=".8" /><path d="M3.500 6H10.500M3.500 8.500H8M3.500 11H8" stroke="#8fa0b8" /><path d="M9 7.500L10.500 8L11 9.500L15 13.500C15.500 15 14.500 16 13 15.500L9.500 11.500L8 11L7.700 9.700L9 10.200L9.700 9.400Z" fill="#dfe4ea" stroke="#66707e" strokeWidth=".8" /></svg>
          </button>
          <button aria-label="Развернуть панель" className="ml-auto">
            <svg width="10" height="10" viewBox="0 0 10 10" className="block" fill="#9a9a9a" stroke="#3a3a3a"><path d="M5 .8L9 5H1Z" /><rect x=".8" y="6" width="8.400" height="3" fill="#e2e2e2" /></svg>
          </button>
        </div>
      </div>
    </section>
  );
}

function RightColumn() {
  return (
    <aside className="flex w-[240px] shrink-0 flex-col gap-1">
      <Panel className="h-16" tabs={<HeadTab label="Контекст" tone="open" closable className="w-[75px]" />}>
        <div className="h-[42px] overflow-hidden pl-[7px]">
          <dl className={`-mt-[3px] grid grid-cols-[54px_1fr] gap-y-0.5 ${UI}`}>
            <dt className="font-['DejaVu_Sans_Condensed','DejaVu_Sans',sans-serif] font-bold">Узлы:</dt><dd>641</dd>
            <dt className="font-['DejaVu_Sans_Condensed','DejaVu_Sans',sans-serif] font-bold">Рёбра:</dt><dd>13293</dd>
          </dl>
          <p className={`mt-1.5 ${UI}`}>Ненаправленный граф</p>
        </div>
      </Panel>
      <Panel className="flex-1" tabs={<><HeadTab label="Фильтры" tone="idle" className="w-[75px]" /><HeadTab label="Статистики" tone="open" closable className="w-[88px]" /></>}>
        <button className={`h-6 shrink-0 pt-px pl-[3px] text-left ${UI}`}>Настройки</button>
        <div className="flex flex-1 border-t border-[#7f9db9]">
          <div className="h-[442px] min-w-0 flex-1 overflow-hidden bg-white pt-2.5">
            {stats.map(([title, items]) => (
              <div key={title}>
                <h3 className="flex h-5 items-center gap-[5px] border-y border-[#d6ddf3] bg-[#f7f7f7] pt-px pl-[5px] font-['DejaVu_Sans_Condensed','DejaVu_Sans',sans-serif] text-[13px] leading-4 font-bold">
                  <svg width="9" height="9" viewBox="0 0 9 9" aria-hidden="true"><rect x=".5" y=".5" width="8" height="8" fill="#fff" stroke="#8a8a8a" /><path d="M2 3.500H7L4.500 6Z" fill="#444" /></svg>
                  {title}
                </h3>
                <ul>
                  {items.map((t) => <li key={t} className={`h-[29px] pt-[5px] pl-1 whitespace-nowrap ${UI}`}>{t}</li>)}
                </ul>
              </div>
            ))}
          </div>
          <div className="flex w-[21px] flex-col items-center">
            <button aria-label="Вверх" className="flex h-[21px] items-center"><Chevron dir="up" /></button>
            <div className="h-[317px] w-[19px] bg-[#cdcdcd]" />
            <button aria-label="Вниз" className="mt-auto mb-1 flex h-4 items-center"><Chevron dir="down" /></button>
          </div>
        </div>
        <div className="flex h-5 shrink-0 items-center pr-5">
          <button aria-label="Влево" className="flex w-[21px] justify-center"><Chevron dir="left" /></button>
          <div className="h-[19px] w-[124px] bg-[#cdcdcd]" />
          <button aria-label="Вправо" className="mr-1.5 ml-auto"><Chevron dir="right" /></button>
        </div>
      </Panel>
    </aside>
  );
}

function Task({ label, active, open, wide, children }) {
  return (
    <button aria-label={label} className={`relative flex h-full items-center justify-center ${wide ? "w-[62px]" : "w-[60px]"} ${active ? "bg-[#51585b]" : ""}`}>
      {children}
      {open && <span className={`absolute bottom-0 h-[3px] bg-[#fcd7ae] ${active ? "inset-x-0" : "inset-x-[5px]"}`} />}
    </button>
  );
}

function Taskbar() {
  return (
    <footer className="flex h-[50px] shrink-0 items-center bg-linear-to-r from-[#393c3b] via-[#2c3739] to-[#2b2e33] text-white">
      <Task label="Пуск"><svg width="20" height="20" viewBox="0 0 20 20" fill="#fff"><path d="M0 3L8.500 1.800V9.500H0ZM9.500 1.600L20 0V9.500H9.500ZM0 10.500H8.500V18.200L0 17ZM9.500 10.500H20V20L9.500 18.400Z" /></svg></Task>
      <Task label="Поиск"><svg width="21" height="22" viewBox="0 0 21 22" fill="none" stroke="#fff" strokeWidth="1.300"><circle cx="13.300" cy="7.500" r="6.700" /><path d="M8.600 12.300L.8 21" /></svg></Task>
      <Task label="Представление задач"><svg width="21" height="21" viewBox="0 0 21 21" fill="none" stroke="#fff" strokeWidth="1.200"><path d="M1 0V4H13V0M1 21V17H13V21M1.500 6.500V14.500H12.500V6.500ZM19 0V5M19 11V21" /><path d="M17.500 6.500H20.500V9.500H17.500Z" fill="#fff" stroke="none" /></svg></Task>
      <div className="ml-0.5 flex h-full">
        <Task label="Загрузчик" wide><svg width="28" height="30" viewBox="0 0 28 30" fill="none"><path d="M10 2A13 13 0 0 0 5 24M18 28A13 13 0 0 0 23 6" stroke="#25a6dc" strokeWidth="2" /><path d="M14 5A10 10 0 0 0 5 19M14 25A10 10 0 0 0 23 11M13 28A13 13 0 0 1 4 22M15 2A13 13 0 0 1 24 8" stroke="#1a7aa8" strokeWidth="1.800" /><path d="M11 8H17.500V14H20.500L14.200 22L8 14H11Z" fill="#7ec62e" stroke="#4f8f1a" /></svg></Task>
        <Task label="Проводник" wide>
          <svg width="28" height="25" viewBox="0 0 28 25"><path d="M0 1H11L14 4H27V23H0Z" fill="#e2a010" /><path d="M0 5H12L14 3H28V24H0Z" fill="#fdd45f" /><path d="M5 25V13H23V25H19V18H9V25Z" fill="#3a96de" /><path d="M5 13H23V17H5Z" fill="#4fa9ea" /></svg>
          <span className="absolute inset-x-[5px] bottom-0 h-[3px] border-r-[10px] border-[#c3a98c] bg-[#fcd7ae]" />
        </Task>
        <Task label="Редактор формул" wide><svg width="31" height="31" viewBox="0 0 31 31"><path d="M6 2L28 6L27 26L12 27L1 30V10Z" fill="#fdf3e2" stroke="#c9b89c" strokeWidth=".7" /><path d="M6 2L7 10L1 10Z" fill="#e0d2b8" /><text x="2" y="26" fontSize="11" fontWeight="bold" fill="#c9211e" fontFamily="Liberation Serif">Σ</text><path d="M10 20L14 13L18 16Z" fill="#e8a33c" /><path d="M14 14L20 7L24 10L17 17Z" fill="#f0a93e" /><path d="M20 7L26 0H31L30 4L24 11Z" fill="#2a60b5" /></svg></Task>
        <Task label="Chrome" wide open><svg width="28" height="28" viewBox="0 0 28 28"><circle cx="14" cy="14" r="13.500" fill="#fdd04b" /><path d="M14 14L2.300 7.200A13.500 13.500 0 0 1 25.700 7.200L25.800 7.500H14Z" fill="#de4b3f" /><path d="M2.300 7.200A13.500 13.500 0 0 0 13 27.500L19.500 17L8.500 17Z" fill="#1fa463" /><path d="M14 7.500H25.800A13.500 13.500 0 0 1 13 27.500L19.500 17Z" fill="#fdd04b" /><circle cx="14" cy="14" r="6.400" fill="#f3f3f3" /><circle cx="14" cy="14" r="5.100" fill="#4a8af4" /></svg></Task>
        <Task label="Jupyter" wide open><svg width="22" height="28" viewBox="0 0 22 28"><path d="M1 9C5 0 17 0 21 9C16 4.500 6 4.500 1 9ZM1 19C5 28 17 28 21 19C16 23.500 6 23.500 1 19Z" fill="#f37726" /><circle cx="18" cy="2" r="1.500" fill="#8b8b8b" /><circle cx="3" cy="26" r="2" fill="#9e9e9e" /><circle cx="2" cy="3.500" r="1" fill="#777" /></svg></Task>
        <div className="ml-0.5 h-full"><Task label="Gephi" active open><Script size={30} color="#f2f2f2" bg="#111" /></Task></div>
      </div>
      <div className={`ml-auto flex h-full items-center ${SHELL}`}>
        <button aria-label="Скрытые значки"><svg width="16" height="9" viewBox="0 0 16 9" className="block" fill="none" stroke="#fff" strokeWidth="1.300"><path d="M.8 8.200L8 1L15.200 8.200" /></svg></button>
        <button aria-label="Громкость" className="ml-[22px]"><svg width="21" height="16" viewBox="0 0 21 16" className="block" fill="none" stroke="#fff" strokeWidth="1.200"><path d="M1 5.500H4L8.500 1V15L4 10.500H1ZM11 5.500C12.200 7 12.200 9 11 10.500M13.500 3.500C15.800 6 15.800 10 13.500 12.500" /><path d="M16 1.500C19.500 5 19.500 11 16 14.500" stroke="#8f9596" /></svg></button>
        <span className="ml-[18px] text-[13px] leading-5">ENG</span>
        <div className="ml-[17px] w-[70px] text-center text-[13px] leading-[23px]">
          <div>0:58</div>
          <div>09.11.2019</div>
        </div>
        <button aria-label="Уведомления" className="relative mr-[22px] ml-[22px]">
          <svg width="30" height="32" viewBox="0 0 30 32" className="block"><path d="M1 6H21V21H15L11 25V21H1Z" fill="#fff" /><path d="M4.500 10H17.500M4.500 13.500H17.500M4.500 17H13" stroke="#2b2e33" strokeWidth="1.200" /><circle cx="20" cy="22" r="9.500" fill="#3b4044" stroke="#7b8083" /></svg>
          <span className="absolute right-[6px] bottom-[1px] text-[12px] leading-[18px]">3</span>
        </button>
      </div>
    </footer>
  );
}

export default function App() {
  return (
    <div className="flex min-h-screen flex-col bg-[#f0f0f0] text-black">
      <TitleBar />
      <nav className={`flex h-6 gap-[9px] bg-white pt-1 pl-1 text-[14px] leading-5 ${SHELL}`}>
        {["Файл", "Рабочая область", "Вид", "Сервис", "Окно", "Справка"].map((m) => <button key={m} className="h-5">{m}</button>)}
      </nav>
      <ModeBar />
      <WorkspaceTabs />
      <main className="flex flex-1 gap-1 px-[3px] pt-[7px]">
        <div className="flex w-[272px] shrink-0 flex-col gap-1">
          <PropertyPanel />
          <LayoutPanel />
        </div>
        <GraphPanel />
        <RightColumn />
      </main>
      <div className="flex h-[26px] items-center justify-end pr-1.5">
        <button aria-label="Обновления" className="relative">
          <Globe small />
          <svg width="12" height="9" viewBox="0 0 12 9" className="absolute bottom-0 left-0.5"><path d="M0 0L5 1L3.500 3C5 5.500 8 5.500 11 4.500L12 8C8 9.500 3.500 9 1.500 5L0 6Z" fill="#f6d999" stroke="#8d6a2b" strokeWidth=".8" /></svg>
        </button>
      </div>
      <Taskbar />
    </div>
  );
}
